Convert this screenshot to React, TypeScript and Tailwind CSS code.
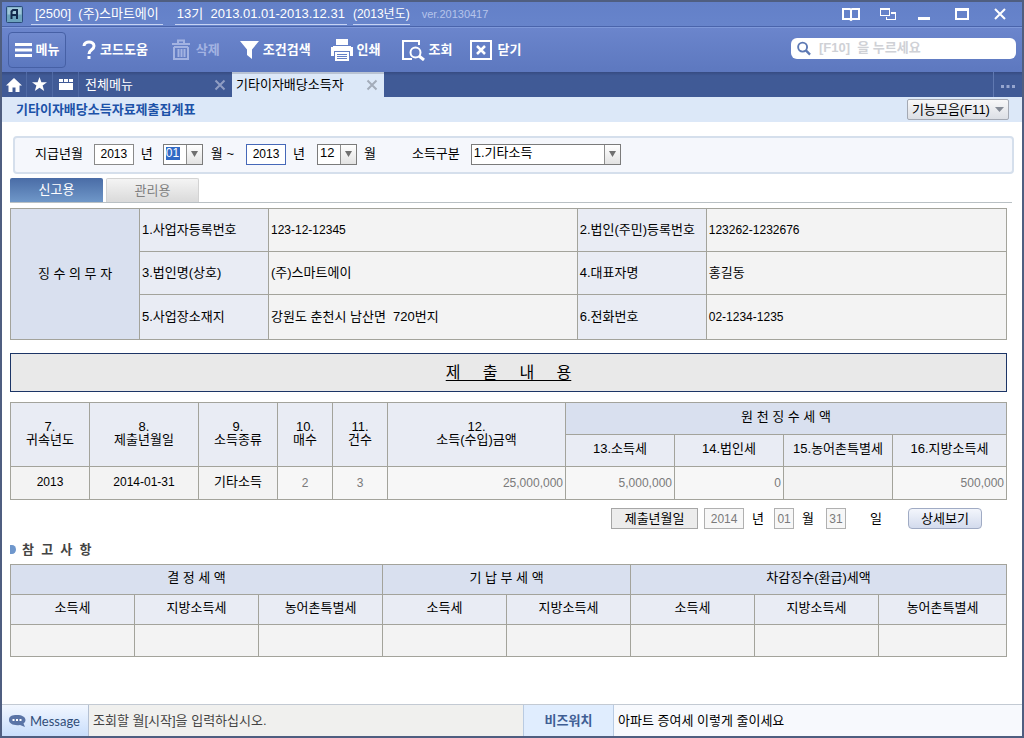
import type { ReactNode } from 'react';

// ── Data ─────────────────────────────────────────────────────────────────────
const agentRows = [
  { left: '1.사업자등록번호', leftValue: '123-12-12345', right: '2.법인(주민)등록번호', rightValue: '123262-1232676' },
  { left: '3.법인명(상호)', leftValue: '(주)스마트에이', right: '4.대표자명', rightValue: '홍길동' },
  { left: '5.사업장소재지', leftValue: '강원도 춘천시 남산면  720번지', right: '6.전화번호', rightValue: '02-1234-1235' },
];

const summaryHeads = [
  ['7.', '귀속년도'],
  ['8.', '제출년월일'],
  ['9.', '소득종류'],
  ['10.', '매수'],
  ['11.', '건수'],
  ['12.', '소득(수입)금액'],
];

const taxHeads = ['13.소득세', '14.법인세', '15.농어촌특별세', '16.지방소득세'];

const noteHeads = ['소득세', '지방소득세', '농어촌특별세', '소득세', '지방소득세', '소득세', '지방소득세', '농어촌특별세'];

// ── Toolbar ──────────────────────────────────────────────────────────────────
function ToolButton({ label, icon, className = '', disabled = false }: {
  label: string;
  icon: ReactNode;
  className?: string;
  disabled?: boolean;
}) {
  return (
    <button
      type="button"
      disabled={disabled}
      className={`flex h-9 items-center gap-1 font-bold whitespace-nowrap ${disabled ? 'text-[#a3b3e2]' : 'text-white'} ${className}`}
    >
      {icon}
      {label}
    </button>
  );
}

function TitleBar() {
  return (
    <header className="flex h-[25px] items-center border-b border-[#4a64ab] bg-linear-to-b from-[#6380c8] to-[#6784cb] pr-4 pl-1 text-white">
      <svg width="17" height="17" viewBox="0 0 17 17" className="mr-2" aria-hidden="true">
        <rect x="0.5" y="0.5" width="16" height="16" rx="1" fill="#6da3bd" stroke="#294b79" />
        <rect x="1.5" y="1.5" width="14" height="7" fill="#9fc6d8" />
        <path d="M5.5 13V5.500L7 4h4v9M5.500 9H11" fill="none" stroke="#12294d" strokeWidth="2" />
      </svg>
      <h1 className="flex items-center whitespace-pre">
        <span className="border-b border-[#c6d3f3] px-1 leading-5">[2500]  (주)스마트에이</span>
        <span className="ml-3 border-b border-[#c6d3f3] px-0.5 leading-5">13기  2013.01.01-2013.12.31</span>
        <span className="ml-1.5 border-b border-[#c6d3f3] text-xs leading-5">(2013년도)</span>
        <span className="ml-3 text-[11px] text-[#b6c4ea]">ver.20130417</span>
      </h1>
      <div className="ml-auto flex items-center gap-5">
        <button type="button" aria-label="도움말">
          <svg width="18" height="15" viewBox="0 0 18 15" fill="none" stroke="#fff" strokeWidth="2">
            <path d="M9 2.500L7.500 2H1v10h6.500L9 13l1.500-1H17V2h-6.500zM9 2.500V14" />
          </svg>
        </button>
        <button type="button" aria-label="창 전환">
          <svg width="17" height="13" viewBox="0 0 17 13" fill="#fff" fillRule="evenodd">
            <path d="M0 0h10v8H0zM1 2v5h8V2z" />
            <path d="M11 4h5v8H6V9h1v2h8V6h-4z" />
          </svg>
        </button>
        <button type="button" aria-label="최소화">
          <svg width="14" height="14" viewBox="0 0 14 14"><path d="M1 10h12v3H1z" fill="#fff" /></svg>
        </button>
        <button type="button" aria-label="최대화" className="ml-1">
          <svg width="15" height="14" viewBox="0 0 15 14"><path d="M0 1h14v12H0zM2 4v7h10V4z" fill="#fff" fillRule="evenodd" /></svg>
        </button>
        <button type="button" aria-label="창 닫기" className="ml-1">
          <svg width="12" height="12" viewBox="0 0 12 12"><path d="M1 1l10 10M11 1L1 11" stroke="#fff" strokeWidth="2" /></svg>
        </button>
      </div>
    </header>
  );
}

function Toolbar() {
  return (
    <div className="flex h-[45px] items-center border-t border-[#7f99da] bg-linear-to-b from-[#6b85cc] to-[#5d78bf] pr-1.5 pl-1.5 text-white">
      <ToolButton
        label="메뉴"
        className="w-[58px] justify-center rounded-sm border border-[#4660a5] bg-linear-to-b from-[#7089ce] to-[#5b77bf]"
        icon={<svg width="17" height="16" viewBox="0 0 17 16"><path d="M0 1h17v3H0zM0 6.500h17v3H0zM0 12h17v3H0z" fill="#fff" /></svg>}
      />
      <ToolButton
        label="코드도움"
        className="ml-4"
        icon={
          <svg width="14" height="20" viewBox="0 0 14 20">
            <path d="M2 6C2 0.500 12 0.500 12 6c0 4-5 3.500-5 8" fill="none" stroke="#fff" strokeWidth="3" />
            <path d="M5.500 16h3v3h-3z" fill="#fff" />
          </svg>
        }
      />
      <ToolButton
        label="삭제"
        disabled
        className="ml-5.5"
        icon={
          <svg width="22" height="22" viewBox="0 0 22 22" fill="none" stroke="#a3b3e2" strokeWidth="2">
            <path d="M2 5h18M8 4V1.500h6V4M4 8v12h14V8M4 8h14M8.500 10v8M11.500 10v8M14.500 10v8" />
          </svg>
        }
      />
      <ToolButton
        label="조건검색"
        className="ml-5"
        icon={<svg width="19" height="20" viewBox="0 0 19 20"><path d="M0 1h19l-7 8.500V19l-5-4V9.500z" fill="#fff" /></svg>}
      />
      <ToolButton
        label="인쇄"
        className="ml-5"
        icon={
          <svg width="22" height="22" viewBox="0 0 22 22">
            <path d="M5 0h12v6H5zM0 8h22v9h-3v-5H3v5H0z" fill="#fff" />
            <path d="M2 7h18v2H2zM4 13h14v9H4z" fill="#fff" />
            <path d="M6 15.500h10M6 17.500h10M6 19.500h10" stroke="#647fc6" />
          </svg>
        }
      />
      <ToolButton
        label="조회"
        className="ml-5"
        icon={
          <svg width="24" height="22" viewBox="0 0 24 22" fill="none" stroke="#fff" strokeWidth="2">
            <path d="M18 6V2H2v18h9" />
            <circle cx="14.500" cy="13.500" r="5" />
            <path d="M18 17l5 4" strokeWidth="3" />
          </svg>
        }
      />
      <ToolButton
        label="닫기"
        className="ml-4.5"
        icon={
          <svg width="23" height="22" viewBox="0 0 23 22" fill="none" stroke="#fff" strokeWidth="2">
            <rect x="1" y="2" width="20" height="18" />
            <path d="M7 7l8 8M15 7l-8 8" strokeWidth="2.500" />
          </svg>
        }
      />
      <label className="mb-1 ml-auto flex h-[21px] w-[225px] items-center rounded-md bg-white pl-1.5">
        <svg width="15" height="15" viewBox="0 0 15 15" fill="none" stroke="#5d79b4" strokeWidth="2">
          <circle cx="6" cy="6" r="4.800" />
          <path d="M9.500 9.500l4.500 4.500" strokeWidth="2.500" />
        </svg>
        <input
          type="search"
          aria-label="검색"
          placeholder="[F10]  을 누르세요"
          className="w-full min-w-0 pl-2 outline-none placeholder:font-bold placeholder:text-[#cfd1d6]"
        />
      </label>
    </div>
  );
}

function CloseMark({ color }: { color: string }) {
  return (
    <svg width="12" height="12" viewBox="0 0 12 12" aria-hidden="true">
      <path d="M1.500 1.500l9 9M10.500 1.500l-9 9" stroke={color} strokeWidth="2" />
    </svg>
  );
}

function TabStrip() {
  return (
    <nav className="flex h-[25px] bg-linear-to-b from-[#364b82] from-0% to-[#405a96] to-15% text-white">
      <button type="button" aria-label="홈" className="flex w-[25px] items-center justify-center border-r border-[#506aa5]">
        <svg width="16" height="14" viewBox="0 0 16 14"><path d="M8 0l8 7.500h-2.500V14h-4V9.500h-3V14h-4V7.500H0z" fill="#fff" /></svg>
      </button>
      <button type="button" aria-label="즐겨찾기" className="flex w-[26px] items-center justify-center border-r border-[#506aa5]">
        <svg width="15" height="15" viewBox="0 0 15 15"><path d="M7.500 0l1.900 5.200H15l-4.400 3.400L12.200 14 7.500 10.800 2.800 14l1.600-5.400L0 5.200h5.600z" fill="#fff" /></svg>
      </button>
      <button type="button" aria-label="폴더" className="flex w-[26px] items-center justify-center border-r border-[#506aa5]">
        <svg width="14" height="13" viewBox="0 0 14 13"><path d="M0 1h4v3H0zM5 1h4v3H5zM10 1h4v3h-4zM0 5h14v7H0z" fill="#fff" /></svg>
      </button>
      <div className="flex w-[153px] items-center justify-between pr-1.5 pl-1.5">
        <a href="#menu">전체메뉴</a>
        <button type="button" aria-label="전체메뉴 닫기"><CloseMark color="#8f9dc3" /></button>
      </div>
      <div className="flex w-[152px] items-center justify-between border-t-2 border-[#b9c3d3] bg-[#dce8f8] pr-1.5 pb-0.5 pl-1 text-black">
        <a href="#dividend" className="whitespace-nowrap">기타이자배당소득자</a>
        <button type="button" aria-label="기타이자배당소득자 닫기"><CloseMark color="#a3acba" /></button>
      </div>
      <button type="button" aria-label="더보기" className="ml-auto flex w-[29px] items-center justify-center border-l border-[#6079b1] pt-1">
        <svg width="14" height="3" viewBox="0 0 14 3" fill="#96a6cf"><path d="M0 0h3v3H0zM5.500 0h3v3h-3zM11 0h3v3h-3z" /></svg>
      </button>
    </nav>
  );
}

// ── Filter ───────────────────────────────────────────────────────────────────
function Combo({ label, value, className, highlighted = false }: {
  label: string;
  value: string;
  className: string;
  highlighted?: boolean;
}) {
  return (
    <span className={`relative flex h-[21px] border border-[#7b7b7b] bg-white ${className}`}>
      <select
        aria-label={label}
        defaultValue={value}
        className={`w-full appearance-none pb-0.5 pl-0.5 outline-none ${
          highlighted
            ? 'bg-[linear-gradient(#316ac5,#316ac5)] bg-[length:14px_13px] bg-[position:2px_2px] bg-no-repeat text-xs text-white'
            : 'text-black'
        }`}
      >
        <option>{value}</option>
      </select>
      <span className="pointer-events-none absolute inset-y-0 right-0 flex w-4 items-center justify-center border-l border-[#8d8d8d] bg-linear-to-b from-white to-[#e2e2e2]">
        <svg width="7" height="6" viewBox="0 0 7 6"><path d="M0 0h7L3.500 6z" fill="#707070" /></svg>
      </span>
    </span>
  );
}

function FilterPanel() {
  return (
    <form className="mr-2 ml-[11px] flex h-[38px] items-center rounded-sm border-2 border-[#d5dfec] bg-[#f5f7fc] pb-0.5 pl-5 whitespace-nowrap">
      <span>지급년월</span>
      <input aria-label="시작 연도" defaultValue="2013" className="ml-[11px] h-[21px] w-10 border border-[#8a8a8a] bg-white text-center text-xs" />
      <span className="ml-[7px]">년</span>
      <Combo label="시작 월" value="01" highlighted className="ml-2.5 w-10" />
      <span className="ml-2">월 ~</span>
      <input aria-label="종료 연도" defaultValue="2013" className="ml-3 h-[21px] w-10 border border-[#4668b8] bg-white text-center text-xs" />
      <span className="ml-[7px]">년</span>
      <Combo label="종료 월" value="12" className="ml-3 w-10" />
      <span className="ml-[7px]">월</span>
      <span className="ml-9">소득구분</span>
      <Combo label="소득구분" value="1.기타소득" className="ml-[11px] w-[150px]" />
    </form>
  );
}

// ── Tables ───────────────────────────────────────────────────────────────────
const cell = 'border border-[#a3a39b]';
const headCell = 'border border-[#a3a39b] bg-[#e9ecf4] font-normal';
const groupCell = 'border border-[#a3a39b] bg-[#d9e0ef] font-normal';

function AgentTable() {
  return (
    <table className="w-full table-fixed border-collapse bg-[#f3f3f3]">
      <colgroup>
        <col className="w-[129px]" />
        <col className="w-[129px]" />
        <col className="w-[31%]" />
        <col className="w-[129px]" />
        <col />
      </colgroup>
      <tbody>
        {agentRows.map((row, i) => (
          <tr key={row.left} className={i === 2 ? 'h-[45px]' : 'h-[43px]'}>
            {i === 0 && <th rowSpan={3} scope="rowgroup" className={groupCell}>징 수 의 무 자</th>}
            <th scope="row" className={`${headCell} pl-0.5 text-left`}>{row.left}</th>
            <td className={`${cell} pl-0.5 whitespace-pre ${i === 0 ? 'text-xs' : ''}`}>{row.leftValue}</td>
            <th scope="row" className={`${headCell} pl-0.5 text-left whitespace-nowrap`}>{row.right}</th>
            <td className={`${cell} pl-0.5 ${i === 1 ? '' : 'text-xs'}`}>{row.rightValue}</td>
          </tr>
        ))}
      </tbody>
    </table>
  );
}

function SummaryTable() {
  return (
    <table className="w-full table-fixed border-collapse bg-[#f7f7f7]">
      <colgroup>
        <col className="w-[79px]" />
        <col className="w-[109px]" />
        <col className="w-[79px]" />
        <col className="w-[55px]" />
        <col className="w-[55px]" />
        <col />
        <col className="w-[109px]" />
        <col className="w-[109px]" />
        <col className="w-[109px]" />
        <col className="w-[114px]" />
      </colgroup>
      <thead>
        <tr className="h-8">
          {summaryHeads.map(([no, text]) => (
            <th key={no} rowSpan={2} scope="col" className={`${headCell} pb-1 leading-[13px]`}>
              {no}<br />{text}
            </th>
          ))}
          <th colSpan={4} scope="colgroup" className={`${groupCell} pb-1`}>원 천 징 수 세 액</th>
        </tr>
        <tr className="h-8">
          {taxHeads.map(text => (
            <th key={text} scope="col" className={`${headCell} pb-1 whitespace-nowrap`}>{text}</th>
          ))}
        </tr>
      </thead>
      <tbody>
        <tr className="h-[33px] text-xs text-[#7a7a7a]">
          <td className={`${cell} bg-[#f3f3f3] pb-0.5 text-center text-black`}>2013</td>
          <td className={`${cell} bg-[#f3f3f3] pb-0.5 text-center text-black`}>2014-01-31</td>
          <td className={`${cell} bg-[#f3f3f3] pb-0.5 text-center text-[13px] text-black`}>기타소득</td>
          <td className={`${cell} text-center`}>2</td>
          <td className={`${cell} text-center`}>3</td>
          <td className={`${cell} pr-0.5 text-right`}>25,000,000</td>
          <td className={`${cell} pr-0.5 text-right`}>5,000,000</td>
          <td className={`${cell} pr-0.5 text-right`}>0</td>
          <td className={`${cell} bg-[#f3f3f3]`} />
          <td className={`${cell} pr-0.5 text-right`}>500,000</td>
        </tr>
      </tbody>
    </table>
  );
}

function NoteTable() {
  return (
    <table className="w-full table-fixed border-collapse bg-[#f3f3f3]">
      <colgroup>
        <col span={7} className="w-[124px]" />
        <col />
      </colgroup>
      <thead>
        <tr className="h-[30px]">
          <th colSpan={3} scope="colgroup" className={`${groupCell} pb-1`}>결 정 세 액</th>
          <th colSpan={2} scope="colgroup" className={`${groupCell} pb-1`}>기 납 부 세 액</th>
          <th colSpan={3} scope="colgroup" className={`${groupCell} pb-1`}>차감징수(환급)세액</th>
        </tr>
        <tr className="h-[30px]">
          {noteHeads.map((text, i) => (
            <th key={i} scope="col" className={`${headCell} pb-1`}>{text}</th>
          ))}
        </tr>
      </thead>
      <tbody>
        <tr className="h-8">
          {noteHeads.map((_, i) => <td key={i} className={cell} />)}
        </tr>
      </tbody>
    </table>
  );
}

// ── Submit date ──────────────────────────────────────────────────────────────
function SubmitRow() {
  const box = 'h-[21px] border border-[#b0b0b0] bg-[#f7f7f7] text-center text-xs text-[#7a7a7a]';
  return (
    <div className="mt-2 flex items-center justify-end pr-[25px] whitespace-nowrap">
      <button type="button" className="h-[21px] w-[87px] border border-[#a6a6a6] bg-[#ececec]">제출년월일</button>
      <input aria-label="제출 연도" readOnly value="2014" className={`${box} ml-1.5 w-10`} />
      <span className="ml-2">년</span>
      <input aria-label="제출 월" readOnly value="01" className={`${box} ml-2.5 w-5`} />
      <span className="ml-2">월</span>
      <input aria-label="제출 일" readOnly value="31" className={`${box} ml-3 w-5`} />
      <span className="ml-6">일</span>
      <button type="button" className="ml-[26px] h-[21px] w-[74px] rounded-sm border border-[#a0abc4] bg-linear-to-b from-[#f3f6fc] to-[#d3dbed]">
        상세보기
      </button>
    </div>
  );
}

function StatusBar() {
  return (
    <footer className="flex h-8 items-stretch border-t border-[#c3cad3]">
      <div className="flex w-[87px] items-center gap-1 border-r border-[#b4c0d2] bg-linear-to-b from-[#f2f7ff] to-[#c9defb] pl-1.5 font-[Lato,sans-serif] text-[13px] text-[#304d78]">
        <svg width="18" height="14" viewBox="0 0 18 14" aria-hidden="true">
          <path d="M9 1c5 0 8.500 2 8.500 5 0 1.500-.8 2.800-2 3.500L17 13l-5-2c-6 .8-11-1-11-5s3-5 8-5z" fill="#5a74a6" />
          <path d="M4.500 5h2v2h-2zM8 5h2v2H8zM11.500 5h2v2h-2z" fill="#fff" />
        </svg>
        Message
      </div>
      <p className="flex flex-1 items-center bg-[#f0f0ee] pl-1 text-[#444]">조회할 월[시작]을 입력하십시오.</p>
      <strong className="flex w-[91px] items-center justify-center border-x border-[#b9cbe2] bg-[#e0edfe] text-[#3f5e94]">비즈워치</strong>
      <a href="#bizwatch" className="flex w-[40%] items-center bg-[#f7f9fd] pl-1 text-black">아파트 증여세 이렇게 줄이세요</a>
    </footer>
  );
}

export default function App() {
  return (
    <div className="flex min-h-screen flex-col border-2 border-[#4f5e80] bg-white font-['Liberation_Sans','Noto_Sans_CJK_KR',sans-serif] text-[13px] leading-4 text-black">
      <TitleBar />
      <Toolbar />
      <TabStrip />

      <div className="flex h-[25px] items-center justify-between bg-[#dce8f8] pr-[13px] pl-3.5">
        <h2 className="font-bold text-[#1c52a8]">기타이자배당소득자료제출집계표</h2>
        <button
          type="button"
          className="flex h-[21px] w-[102px] items-center justify-between rounded-xs border border-[#a4a9b3] bg-linear-to-b from-[#f8f8f9] to-[#dcdfe5] px-1"
        >
          기능모음(F11)
          <svg width="9" height="5" viewBox="0 0 9 5"><path d="M0 0h9L4.500 5z" fill="#858b96" /></svg>
        </button>
      </div>

      <main className="flex-1 pt-3.5">
        <FilterPanel />

        <div className="mt-1 mr-[10px] ml-2 flex h-[25px] gap-[3px] border-b border-[#b9c0c4]" role="tablist">
          <button type="button" role="tab" aria-selected="true" className="w-[93px] rounded-t-xs bg-linear-to-b from-[#4a6ca6] to-[#6f97c8] text-white">
            신고용
          </button>
          <button type="button" role="tab" aria-selected="false" className="w-[93px] rounded-t-xs border border-b-0 border-[#d3d3d3] bg-linear-to-b from-[#f4f4f4] to-[#dadada] text-[#808080]">
            관리용
          </button>
        </div>

        <div className="mt-[5px] mr-[15px] ml-2">
          <AgentTable />
          <h2 className="mt-[13px] mb-2.5 flex h-[39px] items-center justify-center border border-[#1c3566] bg-[#e9e9e9] text-base whitespace-pre underline decoration-1 underline-offset-2">
            제     출     내     용
          </h2>
          <SummaryTable />
          <SubmitRow />
          <h3 className="mt-3 mb-1.5 flex h-[17px] items-center gap-1.5 font-bold whitespace-pre text-[#444]">
            <svg width="6" height="9" viewBox="0 0 6 9" aria-hidden="true"><path d="M0 0h2a4 4.500 0 0 1 0 9H0z" fill="#6f97cc" /></svg>
            참  고  사  항
          </h3>
          <NoteTable />
        </div>
      </main>

      <StatusBar />
    </div>
  );
}
